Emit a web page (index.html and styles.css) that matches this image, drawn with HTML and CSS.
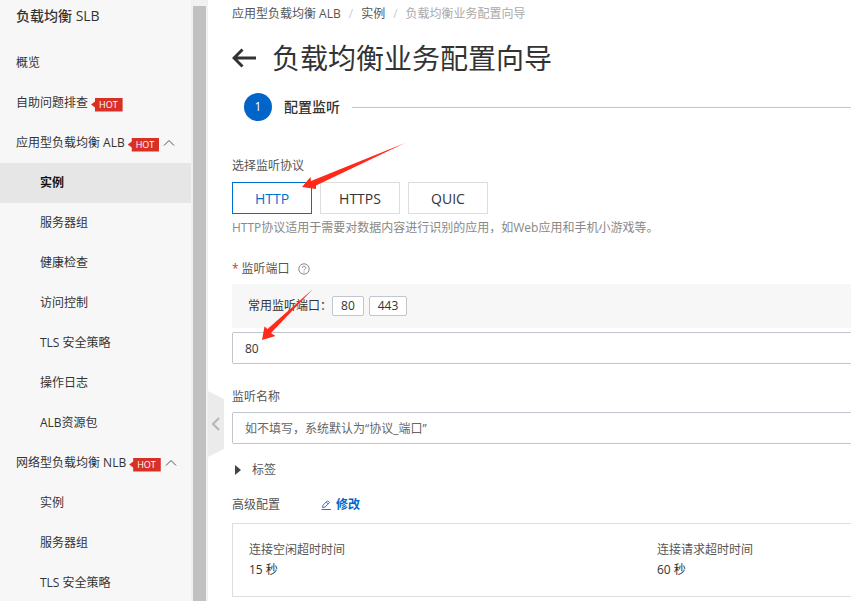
FILE: index.html
```html
<!DOCTYPE html>
<html lang="zh-CN">
<head>
    <meta charset="UTF-8">
    <meta name="viewport" content="width=device-width, initial-scale=1.0">
    <title>负载均衡业务配置向导</title>
    <link rel="stylesheet" href="styles.css">
</head>
<body>
    <div class="layout">
        <aside class="sidebar">
            <h2 class="sidebar-title">负载均衡 SLB</h2>
            <nav class="menu">
                <a href="#" class="menu-item">概览</a>
                <a href="#" class="menu-item">自助问题排查 <span class="hot">HOT</span></a>
                <a href="#" class="menu-item">应用型负载均衡 ALB <span class="hot">HOT</span>
                    <svg class="chevron" width="12" height="8" viewBox="0 0 12 8"><path d="M1 6.5 6 1.5l5 5"/></svg>
                </a>
                <a href="#" class="menu-item sub active">实例</a>
                <a href="#" class="menu-item sub">服务器组</a>
                <a href="#" class="menu-item sub">健康检查</a>
                <a href="#" class="menu-item sub">访问控制</a>
                <a href="#" class="menu-item sub">TLS 安全策略</a>
                <a href="#" class="menu-item sub">操作日志</a>
                <a href="#" class="menu-item sub">ALB资源包</a>
                <a href="#" class="menu-item">网络型负载均衡 NLB <span class="hot">HOT</span>
                    <svg class="chevron" width="12" height="8" viewBox="0 0 12 8"><path d="M1 6.5 6 1.5l5 5"/></svg>
                </a>
                <a href="#" class="menu-item sub">实例</a>
                <a href="#" class="menu-item sub">服务器组</a>
                <a href="#" class="menu-item sub">TLS 安全策略</a>
            </nav>
        </aside>
        <div class="scrollbar"><div class="scrollbar-thumb"></div></div>

        <main class="content">
            <button class="collapse" type="button" aria-label="收起">
                <svg width="16" height="66" viewBox="0 0 16 66"><path class="collapse-bg" d="M0 0 16 8v50L0 66z"/><path class="collapse-arrow" d="M11 27 5 33l6 6"/></svg>
            </button>

            <div class="page">
                <nav class="breadcrumb">
                    <a href="#">应用型负载均衡 ALB</a>
                    <span class="slash">/</span>
                    <a href="#">实例</a>
                    <span class="slash">/</span>
                    <span class="current">负载均衡业务配置向导</span>
                </nav>

                <header class="page-header">
                    <a href="#" class="back" aria-label="返回">
                        <svg width="24" height="20" viewBox="0 0 24 20"><path d="M24 10H2M10.500 1.500 2 10l8.500 8.500"/></svg>
                    </a>
                    <h1>负载均衡业务配置向导</h1>
                </header>

                <div class="step">
                    <span class="step-number">1</span>
                    <span class="step-title">配置监听</span>
                    <span class="step-line"></span>
                </div>

                <form>
                    <fieldset class="protocols">
                        <legend class="label">选择监听协议</legend>
                        <div class="protocol-list">
                            <button type="button" class="protocol selected">HTTP</button>
                            <button type="button" class="protocol">HTTPS</button>
                            <button type="button" class="protocol">QUIC</button>
                        </div>
                        <p class="help">HTTP协议适用于需要对数据内容进行识别的应用，如Web应用和手机小游戏等。</p>
                    </fieldset>

                    <div class="label-row">
                        <span class="required">*</span>
                        <label class="label" for="port">监听端口</label>
                        <svg class="question" width="12" height="12" viewBox="0 0 12 12"><circle cx="6" cy="6" r="5.200"/><path d="M4.300 4.900a1.700 1.700 0 1 1 2.500 1.500Q6 6.800 6 7.400M6 8.500v1"/></svg>
                    </div>
                    <div class="common-ports">
                        <span>常用监听端口：</span>
                        <button type="button" class="port">80</button>
                        <button type="button" class="port">443</button>
                    </div>
                    <input class="text-input" id="port" type="text" value="80">

                    <div class="label-row">
                        <label class="label" for="name">监听名称</label>
                    </div>
                    <input class="text-input" id="name" type="text" placeholder="如不填写，系统默认为“协议_端口”">

                    <button type="button" class="tags">
                        <svg width="6" height="10" viewBox="0 0 6 10"><path d="M0 0 6 5 0 10z"/></svg>
                        标签
                    </button>

                    <div class="advanced">
                        <span class="label">高级配置</span>
                        <a href="#" class="edit">
                            <svg width="10" height="10" viewBox="0 0 10 10"><path d="M.5 9.500H10M1.500 7.500 2 5.200 6.500.7l2 2L4 7.100zM5.300 2l2 2"/></svg>
                            修改
                        </a>
                    </div>
                    <dl class="settings">
                        <div>
                            <dt>连接空闲超时时间</dt>
                            <dd>15 秒</dd>
                        </div>
                        <div>
                            <dt>连接请求超时时间</dt>
                            <dd>60 秒</dd>
                        </div>
                    </dl>
                </form>
            </div>

            <!-- Pointers over the form -->
            <svg class="pointer pointer-protocol" width="103" height="46" viewBox="0 0 103 46"><path d="M0 44 8.500 34 9 38 103 0 14 42.500V46z"/></svg>
            <svg class="pointer pointer-port" width="51" height="51" viewBox="0 0 51 51"><path d="M0 51 2.500 37.500 5.500 40 51 0 9 44l4.500 3z"/></svg>
        </main>
    </div>
</body>
</html>
```

FILE: styles.css
```css
* {
    box-sizing: border-box;
}
body {
    margin: 0;
    font-family: "Open Sans", "Noto Sans CJK SC", sans-serif;
    font-size: 12px;
    line-height: 20px;
    color: #333;
    background-color: #fff;
}
a {
    color: inherit;
    text-decoration: none;
}
button,
input {
    font-family: inherit;
    color: inherit;
}
svg {
    flex-shrink: 0;
}
.layout {
    display: flex;
    height: 100vh;
    overflow: hidden;
}

/* Sidebar */
.sidebar {
    width: 191px;
    flex-shrink: 0;
    overflow: hidden;
    background-color: #f7f7f7;
}
.sidebar-title {
    margin: 0;
    padding: 6px 16px 17px;
    font-size: 14px;
    font-weight: 500;
}
.menu-item {
    display: flex;
    align-items: center;
    height: 40px;
    padding-left: 16px;
}
.menu-item.sub {
    padding-left: 40px;
}
.menu-item.active {
    background-color: #e6e6e6;
    color: #111;
    font-weight: 700;
}
.hot {
    height: 14px;
    margin: 3px 0 0 3px;
    padding: 0 5px 0 8px;
    background-color: #d93026;
    clip-path: polygon(4px 0, 100% 0, 100% 100%, 4px 100%, 4px 10px, 0 50%, 4px 4px);
    color: #fff;
    font-size: 9px;
    line-height: 14px;
}
.chevron {
    margin-left: 4px;
    fill: none;
    stroke: #555;
}
.scrollbar {
    width: 17px;
    flex-shrink: 0;
    padding: 6px 2px 0;
    background-color: #f1f1f1;
}
.scrollbar-thumb {
    height: 100%;
    background-color: #c1c1c1;
}

/* Content */
.content {
    position: relative;
    flex: 1;
    overflow: hidden;
}
.page {
    min-width: 898px;
    padding: 4px 24px;
}
.collapse {
    position: absolute;
    top: 391px;
    left: 0;
    padding: 0;
    border: 0;
    background: none;
    cursor: pointer;
}
.collapse svg {
    display: block;
}
.collapse-bg {
    fill: #ebebeb;
}
.collapse-arrow {
    fill: none;
    stroke: #b5b5b5;
    stroke-width: 2;
}
.breadcrumb {
    display: flex;
    gap: 8px;
    color: #555;
}
.breadcrumb .slash {
    color: #ccc;
}
.breadcrumb .current {
    color: #aaa;
}
.page-header {
    display: flex;
    align-items: center;
    gap: 16px;
    margin-top: 14px;
}
.back svg {
    display: block;
    fill: none;
    stroke: #333;
    stroke-width: 3;
}
h1 {
    margin: 0;
    font-size: 28px;
    font-weight: 400;
    line-height: 40px;
}
.step {
    display: flex;
    align-items: center;
    gap: 12px;
    margin: 15px 0 35px;
    padding-left: 12px;
}
.step-number {
    width: 28px;
    height: 28px;
    border-radius: 50%;
    background-color: #0064c8;
    color: #fff;
    line-height: 28px;
    text-align: center;
}
.step-title {
    font-size: 14px;
    font-weight: 500;
}
.step-line {
    flex: 1;
    height: 1px;
    background-color: #c0c6cc;
}

/* Form */
.label {
    color: #555;
}
.protocols {
    margin: 0;
    padding: 0;
    border: 0;
}
.protocols legend {
    padding: 0;
}
.protocol-list {
    display: flex;
    gap: 8px;
    padding-top: 6px;
}
.protocol {
    width: 80px;
    height: 32px;
    padding: 0;
    border: 1px solid #ddd;
    background-color: #fff;
    font-size: 14px;
    cursor: pointer;
}
.protocol.selected {
    border-color: #0070cc;
    color: #0070cc;
}
.help {
    margin: 4px 0 0;
    color: #888;
}
.label-row {
    display: flex;
    align-items: center;
    margin: 21px 0 5px;
}
.text-input + .label-row {
    margin-top: 23px;
}
.required {
    margin-right: 3px;
    color: #d93026;
}
.question {
    margin-left: 8px;
    fill: none;
    stroke: #888;
}
.common-ports {
    display: flex;
    align-items: center;
    height: 44px;
    margin-bottom: 4px;
    padding-left: 16px;
    background-color: #f7f7f7;
}
.port {
    height: 20px;
    margin-right: 5px;
    padding: 0 8px;
    border: 1px solid #c0c6cc;
    border-radius: 2px;
    background-color: #fff;
    font-size: 12px;
    line-height: 18px;
    cursor: pointer;
}
.text-input {
    display: block;
    width: 100%;
    height: 32px;
    padding: 0 12px;
    border: 1px solid #c0c6cc;
    border-radius: 2px;
    background-color: #fff;
    font-size: 12px;
}
.text-input::placeholder {
    color: #666;
    opacity: 1;
}
.tags {
    display: flex;
    align-items: center;
    gap: 11px;
    margin-top: 16px;
    padding: 0 3px;
    border: 0;
    background: none;
    color: #555;
    font-size: 12px;
    line-height: 20px;
    cursor: pointer;
}
.tags svg {
    fill: #444;
}
.advanced {
    display: flex;
    gap: 41px;
    margin: 15px 0 8px;
}
.edit {
    display: flex;
    align-items: center;
    gap: 5px;
    color: #0064c8;
    font-weight: 700;
}
.edit svg {
    fill: none;
    stroke: #3a6fd0;
}
.settings {
    display: grid;
    grid-template-columns: 1fr 1fr;
    margin: 0;
    padding: 16px;
    border: 1px solid #ddd;
}
.settings dt {
    color: #555;
}
.settings dd {
    margin: 0;
}

/* Pointers */
.pointer {
    position: absolute;
    fill: #ff2a1a;
    pointer-events: none;
}
.pointer-protocol {
    top: 143px;
    left: 94px;
}
.pointer-port {
    top: 289px;
    left: 54px;
}
```
